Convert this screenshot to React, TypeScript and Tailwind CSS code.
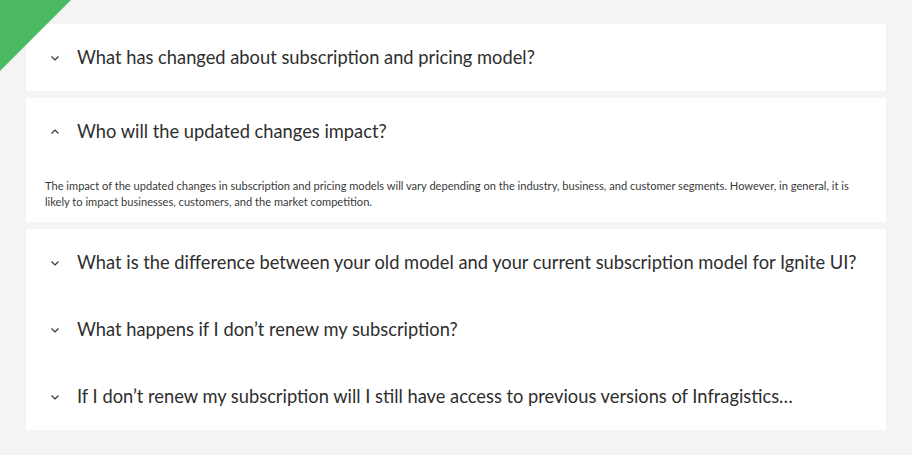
import React from 'react';

const FONT = { fontFamily: 'Lato, "Open Sans", sans-serif' };

const items = [
  { q: 'What has changed about subscription and pricing model?', group: 1 },
  {
    q: 'Who will the updated changes impact?',
    group: 2,
    open: true,
    a: 'The impact of the updated changes in subscription and pricing models will vary depending on the industry, business, and customer segments. However, in general, it is likely to impact businesses, customers, and the market competition.',
  },
  { q: 'What is the difference between your old model and your current subscription model for Ignite UI?', group: 3 },
  { q: 'What happens if I don\u2019t renew my subscription?', group: 3 },
  { q: 'If I don\u2019t renew my subscription will I still have access to previous versions of Infragistics\u2026', group: 3 },
];

function Chevron({ up }: { up?: boolean }) {
  return (
    <svg width="12" height="12" viewBox="0 0 12 12" className="shrink-0">
      <path
        d={up ? 'M2.5 7.5 L6 4 L9.5 7.5' : 'M2.5 4.5 L6 8 L9.5 4.5'}
        fill="none"
        stroke="#333"
        strokeWidth="1.2"
      />
    </svg>
  );
}

function Row({ q, open }: { q: string; open?: boolean }) {
  return (
    <div className="h-[67px] flex items-center pl-[23px] gap-[16px]">
      <Chevron up={open} />
      <span className="text-[18.3px] text-[#2e2e2e] whitespace-nowrap">{q}</span>
    </div>
  );
}

export default function App() {
  const g1 = items.filter((i) => i.group === 1);
  const g2 = items.filter((i) => i.group === 2);
  const g3 = items.filter((i) => i.group === 3);
  return (
    <div className="relative w-[912px] h-[455px] bg-[#f4f4f4] overflow-hidden" style={FONT}>
      {/* corner ribbon */}
      <div
        className="absolute left-0 top-0 w-[71px] h-[71px] bg-[#4cb963]"
        style={{ clipPath: 'polygon(0 0, 100% 0, 0 100%)' }}
      />
      <div className="flex flex-col gap-[7px] pt-[24px] px-[26px]">
        <div className="bg-white">
          {g1.map((i) => (
            <Row key={i.q} q={i.q} />
          ))}
        </div>
        <div className="bg-white">
          {g2.map((i) => (
            <div key={i.q}>
              <Row q={i.q} open />
              <p className="px-[19px] pt-[13px] pb-[12px] text-[11.1px] leading-[16px] text-[#3a3a3a]">{i.a}</p>
            </div>
          ))}
        </div>
        <div className="bg-white">
          {g3.map((i) => (
            <Row key={i.q} q={i.q} />
          ))}
        </div>
      </div>
    </div>
  );
}
